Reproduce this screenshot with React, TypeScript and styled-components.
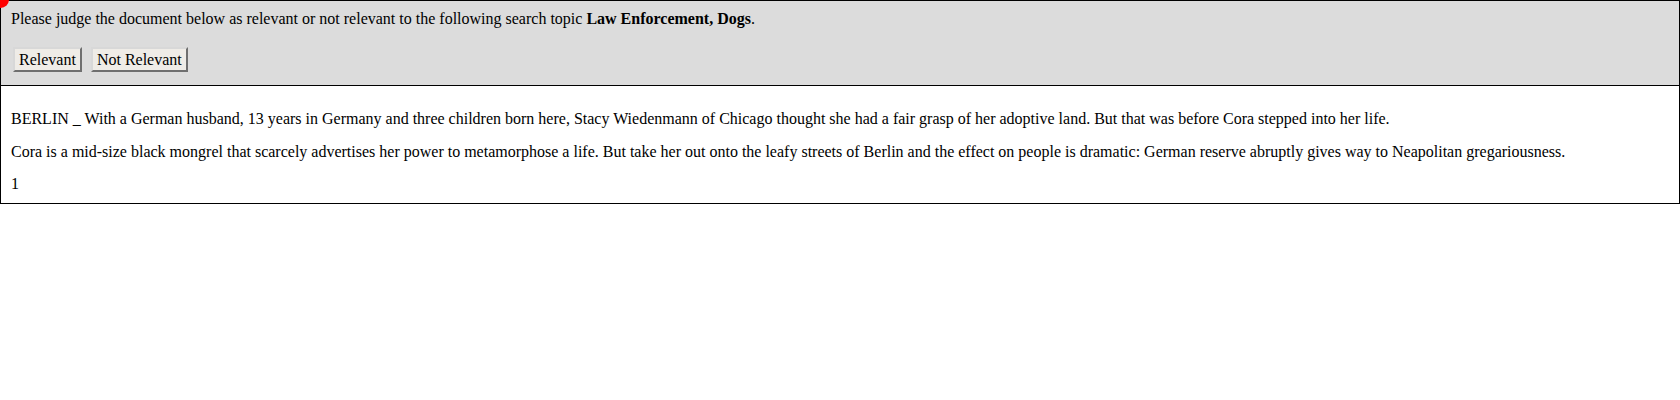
import React from "react";
import styled, { createGlobalStyle } from "styled-components";

const Global = createGlobalStyle`
  html, body { margin: 0; padding: 0; background: #fff; }
  body { font-family: "Liberation Serif", "Times New Roman", serif; font-size: 16px; color: #000; }
`;

const Page = styled.div`
  position: relative;
  display: flex;
  flex-direction: column;
`;

const Dot = styled.div`
  position: absolute;
  left: -8px;
  top: -9px;
  width: 17px;
  height: 17px;
  border-radius: 50%;
  background: #ff0000;
`;

const Prompt = styled.div`
  background: #dcdcdc;
  border: 1px solid #000;
  padding: 8px 10px 13px;
`;

const Question = styled.p`
  margin: 0 0 19px;
  line-height: 19px;
`;

const Buttons = styled.div`
  display: flex;
  gap: 9px;
  padding-left: 2px;
`;

const Button = styled.button`
  font-family: "Liberation Serif", "Times New Roman", serif;
  font-size: 16px;
  color: #000;
  background: #efece7;
  border: 2px solid;
  border-color: #d8d8d8 #6f6f6f #6f6f6f #d8d8d8;
  padding: 0 4px;
  height: 25px;
  line-height: 20px;
  cursor: pointer;
`;

const Doc = styled.div`
  border: 1px solid #000;
  border-top: none;
  padding: 23px 10px 10px;
`;

const Para = styled.p<{ $tight?: boolean }>`
  margin: ${(p) => (p.$tight ? "-1px" : "0")} 0 14px;
  line-height: 19px;
  &:last-child { margin-bottom: 0; }
`;

export default function App() {
  return (
    <Page>
      <Global />
      <Dot />
      <Prompt>
        <Question>
          Please judge the document below as relevant or not relevant to the following search topic{" "}
          <b>Law Enforcement, Dogs</b>.
        </Question>
        <Buttons>
          <Button>Relevant</Button>
          <Button>Not Relevant</Button>
        </Buttons>
      </Prompt>
      <Doc>
        <Para>
          BERLIN _ With a German husband, 13 years in Germany and three children born here, Stacy Wiedenmann of Chicago thought she had a fair grasp of her adoptive land. But that was before Cora stepped into her life.
        </Para>
        <Para>
          Cora is a mid-size black mongrel that scarcely advertises her power to metamorphose a life. But take her out onto the leafy streets of Berlin and the effect on people is dramatic: German reserve abruptly gives way to Neapolitan gregariousness.
        </Para>
        <Para $tight>1</Para>
      </Doc>
    </Page>
  );
}
